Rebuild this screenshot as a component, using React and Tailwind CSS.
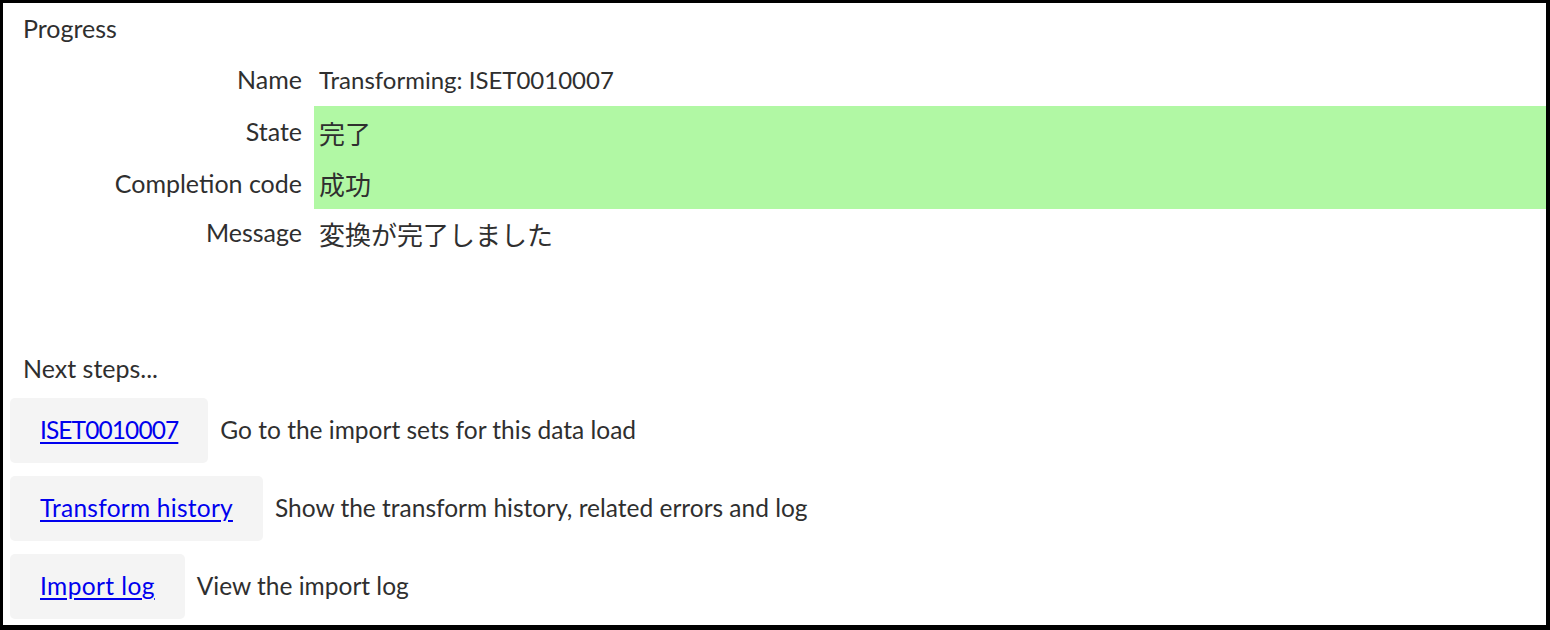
import React from "react";

const rows = [
  { label: "Name", value: "Transforming: ISET0010007", cjk: false, ok: false, h: "h-[52px]" },
  { label: "State", value: "完了", cjk: true, ok: true, h: "h-[52px]" },
  { label: "Completion code", value: "成功", cjk: true, ok: true, h: "h-[51px]" },
  { label: "Message", value: "変換が完了しました", cjk: true, ok: false, h: "h-[48px]" },
];

const steps = [
  { link: "ISET0010007", text: "Go to the import sets for this data load", fit: "tracking-[-0.9px]" },
  { link: "Transform history", text: "Show the transform history, related errors and log", fit: "tracking-[0.25px]" },
  { link: "Import log", text: "View the import log", fit: "tracking-[0.4px]" },
];

const App = () => {
  return (
    <div
      className="w-[1550px] h-[630px] overflow-hidden bg-white text-[#2f2f2f] border-black border-t-[3px] border-l-[3px] border-r-4 border-b-[5px]"
      style={{ fontFamily: "Lato, 'Noto Sans CJK JP', sans-serif" }}
    >
      <div className="h-[51px] flex items-center pl-[20px] text-[25px]">Progress</div>

      <div className="grid grid-cols-[311px_1fr]">
        {rows.map((row) => (
          <React.Fragment key={row.label}>
            <div className={`${row.h} flex items-center justify-end pr-3 text-[25px]`}>{row.label}</div>
            <div
              className={`${row.h} flex items-center pl-[5px] ${row.ok ? "bg-[#b1f8a4]" : ""} ${
                row.cjk ? "text-[26px]" : "text-[24px]"
              }`}
              style={row.cjk ? { fontFamily: "'Noto Sans CJK JP', sans-serif" } : undefined}
            >
              {row.value}
            </div>
          </React.Fragment>
        ))}
      </div>

      <div className="h-[86px]" />

      <div className="h-[52px] flex items-center pl-[20px] text-[25px]">Next steps...</div>

      <div className="mt-[3px] ml-[7px] flex flex-col gap-[13px]">
        {steps.map((step) => (
          <div key={step.link} className="flex items-center gap-3">
            <div className="h-[65px] flex items-center px-[30px] rounded-[5px] bg-[#f4f4f4]">
              <a href="#" className={`text-[24.5px] text-[#0000ee] underline underline-offset-[3px] ${step.fit}`}>
                {step.link}
              </a>
            </div>
            <span className="text-[24.5px]">{step.text}</span>
          </div>
        ))}
      </div>
    </div>
  );
};

export default App;
